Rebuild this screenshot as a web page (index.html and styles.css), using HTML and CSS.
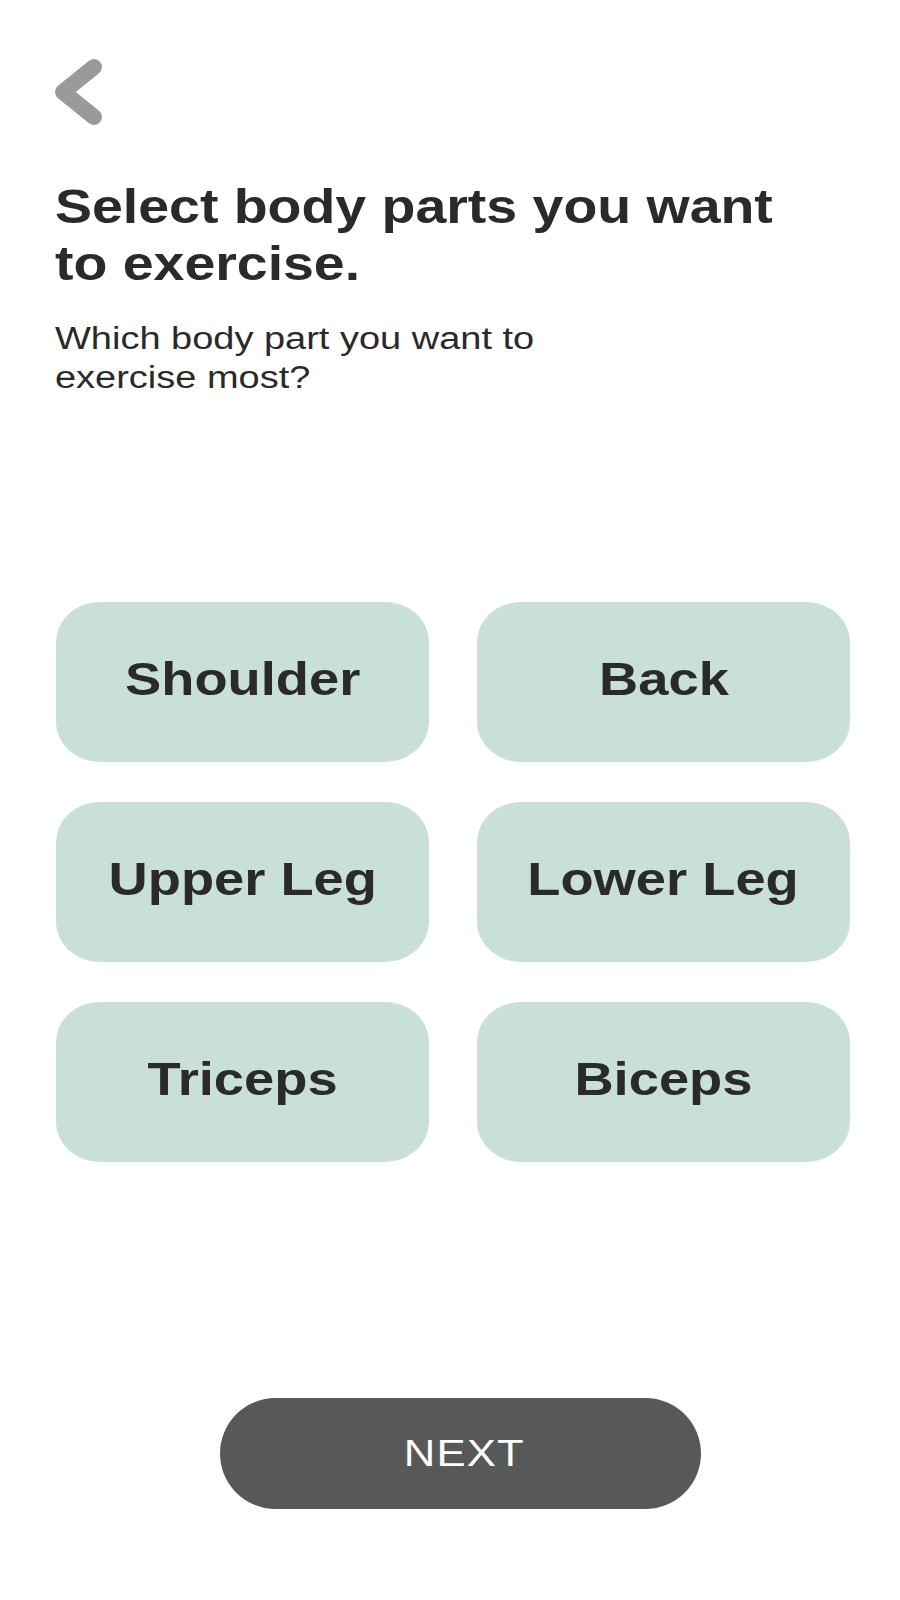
FILE: index.html
```html
<!DOCTYPE html>
<html lang="en">
<head>
<meta charset="utf-8">
<title>Select body parts</title>
<link rel="stylesheet" href="styles.css">
</head>
<body>
<main class="page">
  <button class="back" aria-label="Back">
    <svg width="56" height="76" viewBox="0 0 56 76" aria-hidden="true">
      <polyline points="44,12 13,37 44,62" fill="none" stroke="#9a9a9a" stroke-width="16" stroke-linecap="round" stroke-linejoin="round"/>
    </svg>
  </button>
  <h1 class="title"><span class="stretch">Select body parts you want to exercise.</span></h1>
  <p class="subtitle"><span class="stretch">Which body part you want to exercise most?</span></p>

  <div class="parts">
    <button class="part"><span class="label">Shoulder</span></button>
    <button class="part"><span class="label">Back</span></button>
    <button class="part"><span class="label">Upper Leg</span></button>
    <button class="part"><span class="label">Lower Leg</span></button>
    <button class="part"><span class="label">Triceps</span></button>
    <button class="part"><span class="label">Biceps</span></button>
  </div>

  <button class="next"><span class="next-label">NEXT</span></button>
</main>
</body>
</html>
```

FILE: styles.css
```css
* {
  box-sizing: border-box;
}

html, body {
  margin: 0;
  padding: 0;
  background: #ffffff;
}

body {
  font-family: "Liberation Sans", Arial, sans-serif;
  color: #2a2a2a;
}

.page {
  width: 900px;
  min-height: 1600px;
  padding: 55px 50px 0 55px;
  display: flex;
  flex-direction: column;
  align-items: flex-start;
}

.back {
  border: 0;
  background: none;
  padding: 0;
  margin: 0 0 0 -5px;
  width: 56px;
  height: 76px;
  cursor: pointer;
}

.back svg {
  display: block;
}

.stretch {
  display: block;
  transform-origin: left top;
}

.title {
  margin: 47px 0 0 0;
  font-size: 48px;
  line-height: 57px;
  font-weight: 700;
  max-width: 640px;
}

.title .stretch {
  transform: scaleX(1.155);
}

.subtitle {
  margin: 27px 0 0 0;
  font-size: 31px;
  line-height: 39px;
  font-weight: 400;
  max-width: 420px;
}

.subtitle .stretch {
  transform: scaleX(1.225);
}

.parts {
  margin-top: 205px;
  margin-left: 1px;
  display: grid;
  grid-template-columns: 373px 373px;
  grid-auto-rows: 160px;
  column-gap: 48px;
  row-gap: 40px;
}

.part {
  border: 0;
  margin: 0;
  padding: 0;
  background: #c9dfda;
  border-radius: 44px / 40px;
  display: flex;
  align-items: center;
  justify-content: center;
  font-family: "Liberation Sans", Arial, sans-serif;
  font-size: 46px;
  font-weight: 700;
  color: #2a2a2a;
  cursor: pointer;
}

.label {
  display: inline-block;
  transform: scaleX(1.18);
  margin-top: -6px;
}

.next {
  margin: 236px 0 0 165px;
  width: 481px;
  height: 111px;
  border: 0;
  border-radius: 56px;
  background: #575858;
  color: #ffffff;
  font-family: "Liberation Sans", Arial, sans-serif;
  font-size: 37px;
  font-weight: 400;
  display: flex;
  align-items: center;
  justify-content: center;
  padding: 0 0 0 8px;
  cursor: pointer;
}

.next-label {
  display: inline-block;
  transform: scaleX(1.18);
  letter-spacing: 1px;
}
```
